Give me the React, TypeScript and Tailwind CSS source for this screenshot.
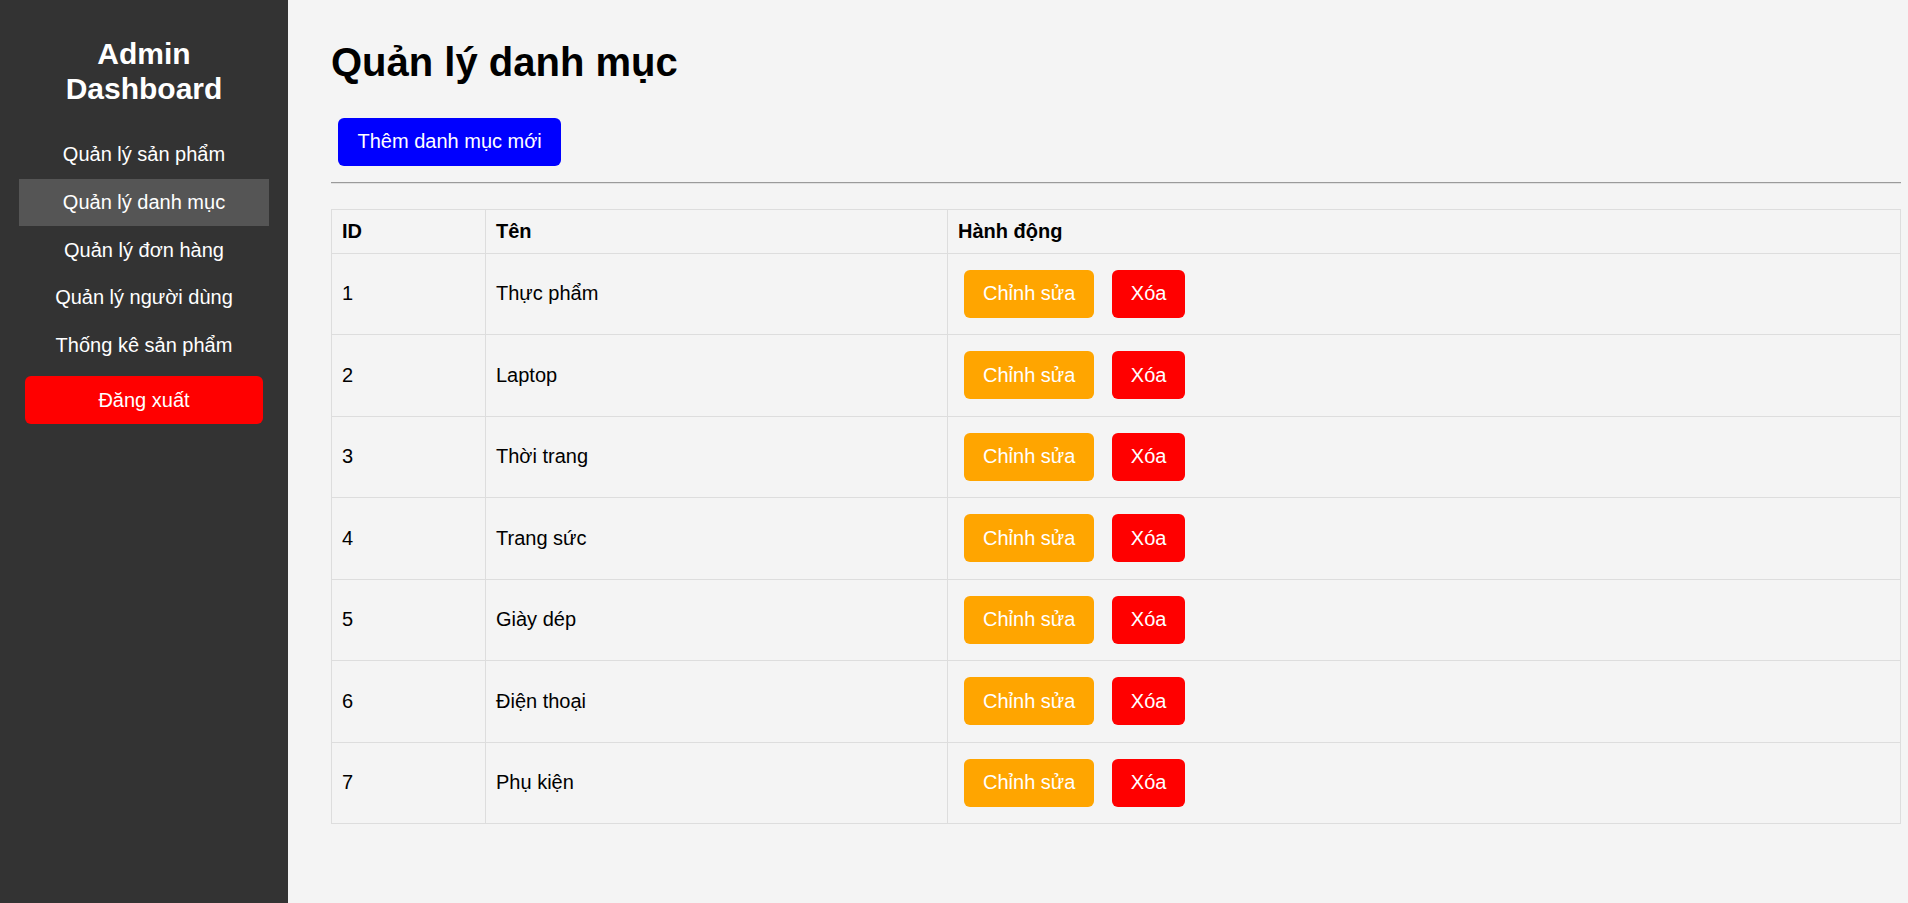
import React from "react";

const navItems = [
  "Quản lý sản phẩm",
  "Quản lý danh mục",
  "Quản lý đơn hàng",
  "Quản lý người dùng",
  "Thống kê sản phẩm",
];

const rows = [
  { id: 1, name: "Thực phẩm" },
  { id: 2, name: "Laptop" },
  { id: 3, name: "Thời trang" },
  { id: 4, name: "Trang sức" },
  { id: 5, name: "Giày dép" },
  { id: 6, name: "Điện thoại" },
  { id: 7, name: "Phụ kiện" },
];

export default function App() {
  return (
    <div
      className="flex min-h-[903px] w-full bg-[#f4f4f4] text-[20px] leading-[23px] text-black"
      style={{ fontFamily: '"Liberation Sans", Arial, sans-serif' }}
    >
      <aside className="flex w-[288px] shrink-0 flex-col bg-[#333333] px-[19px] pt-[37px] text-white">
        <h2 className="mb-[25px] text-center text-[30px] font-bold leading-[34.5px]">
          Admin
          <br />
          Dashboard
        </h2>
        <ul className="flex flex-col">
          {navItems.map((item, i) => (
            <li
              key={item}
              className={
                "h-[47.7px] py-[12.35px] text-center leading-[23px] " +
                (i === 1 ? "bg-[#555555]" : "")
              }
            >
              {item}
            </li>
          ))}
        </ul>
        <button className="mx-[6px] mt-[7px] h-[47.7px] rounded-[6px] bg-[#ff0000] text-center leading-[23px] text-white">
          Đăng xuất
        </button>
      </aside>

      <main className="flex flex-1 flex-col pb-[40px] pl-[43px] pr-[7px] pt-[39px]">
        <h1 className="text-[40px] font-bold leading-[46px]">Quản lý danh mục</h1>
        <div className="pl-[7px] pt-[33px]">
          <button className="h-[47.7px] rounded-[6px] bg-[#0000ff] px-[19.5px] leading-[23px] text-white">
            Thêm danh mục mới
          </button>
        </div>
        <div className="mt-[16px] h-0 border-b border-t border-b-[#e0e0e0] border-t-[#9a9a9a]" />
        <table className="mt-[25px] w-full table-fixed border-collapse">
          <colgroup>
            <col className="w-[154px]" />
            <col className="w-[462px]" />
            <col />
          </colgroup>
          <thead>
            <tr>
              <th className="border border-[#dddddd] p-[10px] text-left font-bold leading-[23px]">ID</th>
              <th className="border border-[#dddddd] p-[10px] text-left font-bold leading-[23px]">Tên</th>
              <th className="border border-[#dddddd] p-[10px] text-left font-bold leading-[23px]">Hành động</th>
            </tr>
          </thead>
          <tbody>
            {rows.map((r) => (
              <tr key={r.id}>
                <td className="border border-[#dddddd] p-[10px] align-middle">{r.id}</td>
                <td className="border border-[#dddddd] p-[10px] align-middle">{r.name}</td>
                <td className="border border-[#dddddd] p-[10px] align-middle">
                  <div className="flex items-center">
                    <button className="m-[6.25px] h-[48px] rounded-[6px] bg-[#ffa500] px-[18.75px] leading-[23px] text-white">
                      Chỉnh sửa
                    </button>
                    <button className="m-[6.25px] ml-[11.75px] h-[48px] rounded-[6px] bg-[#ff0000] px-[18.75px] leading-[23px] text-white">
                      Xóa
                    </button>
                  </div>
                </td>
              </tr>
            ))}
          </tbody>
        </table>
      </main>
    </div>
  );
}
